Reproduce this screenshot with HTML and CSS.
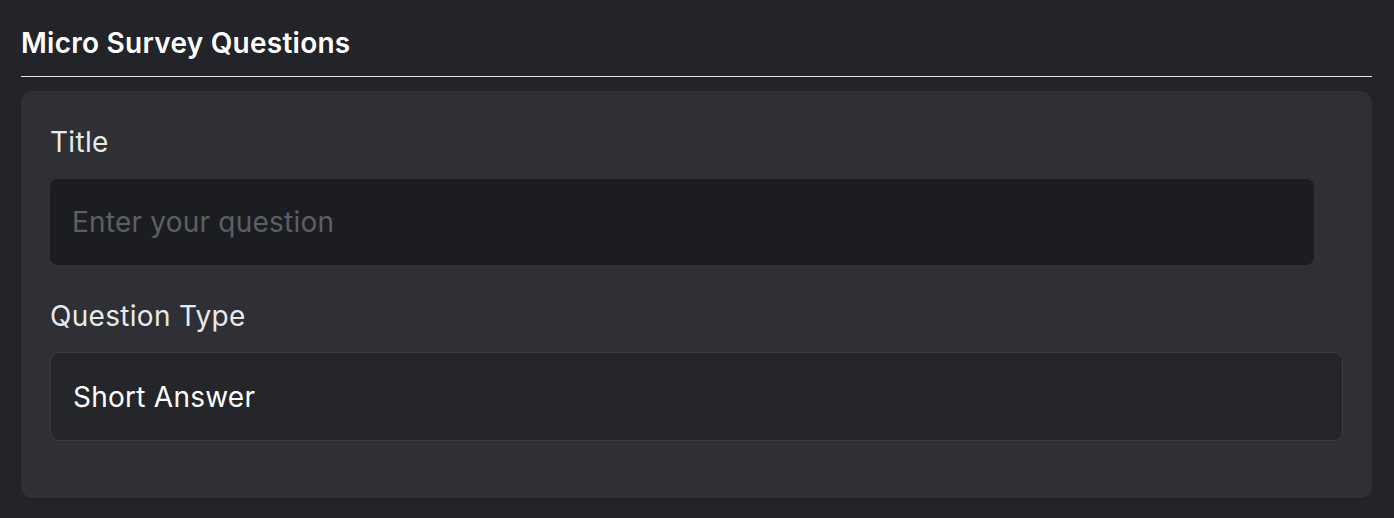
FILE: index.html
```html
<!DOCTYPE html>
<html lang="en">
<head>
<meta charset="utf-8">
<title>Micro Survey Questions</title>
<link rel="stylesheet" href="styles.css">
</head>
<body>
<section class="survey">
  <h2 class="survey-heading">Micro Survey Questions</h2>
  <div class="card">
    <div class="field field-title">
      <label class="field-label" for="q-title">Title</label>
      <input class="text-input" id="q-title" type="text" placeholder="Enter your question">
    </div>
    <div class="field">
      <label class="field-label" for="q-type">Question Type</label>
      <div class="select-box" id="q-type">Short Answer</div>
    </div>
  </div>
</section>
</body>
</html>
```

FILE: styles.css
```css
* { box-sizing: border-box; }

html, body {
  margin: 0;
  background: #222429;
}

body {
  font-family: Inter, "Noto Sans", sans-serif;
  color: #ffffff;
  padding: 0 22px 0 21px;
}

.survey-heading {
  margin: 26px 0 0;
  font-size: 28px;
  line-height: 34px;
  font-weight: 600;
  letter-spacing: 0.25px;
  color: #ffffff;
  padding-bottom: 16px;
  border-bottom: 1px solid #e4e4e6;
}

.card {
  margin-top: 14px;
  background: #2e3035;
  border-radius: 12px;
  padding: 34px 29px 57px;
  display: flex;
  flex-direction: column;
  gap: 34px;
}

.field {
  display: flex;
  flex-direction: column;
  gap: 19px;
}

.field-title {
  gap: 20px;
}

.field-label {
  font-size: 28px;
  line-height: 34px;
  letter-spacing: 0.3px;
  color: #e9e9ea;
}

.text-input {
  width: 1264px;
  height: 86px;
  border: none;
  outline: none;
  border-radius: 8px;
  background: #1c1d21;
  padding: 0 22px;
  font-family: inherit;
  font-size: 28px;
  letter-spacing: 0.22px;
  color: #ffffff;
}

.text-input::placeholder {
  color: #5d5f64;
}

.select-box {
  height: 89px;
  border: 1px solid #3a3c41;
  border-radius: 9px;
  background: #25262a;
  padding: 0 22px;
  display: flex;
  align-items: center;
  font-size: 28px;
  letter-spacing: 0.25px;
  color: #ffffff;
}
```
